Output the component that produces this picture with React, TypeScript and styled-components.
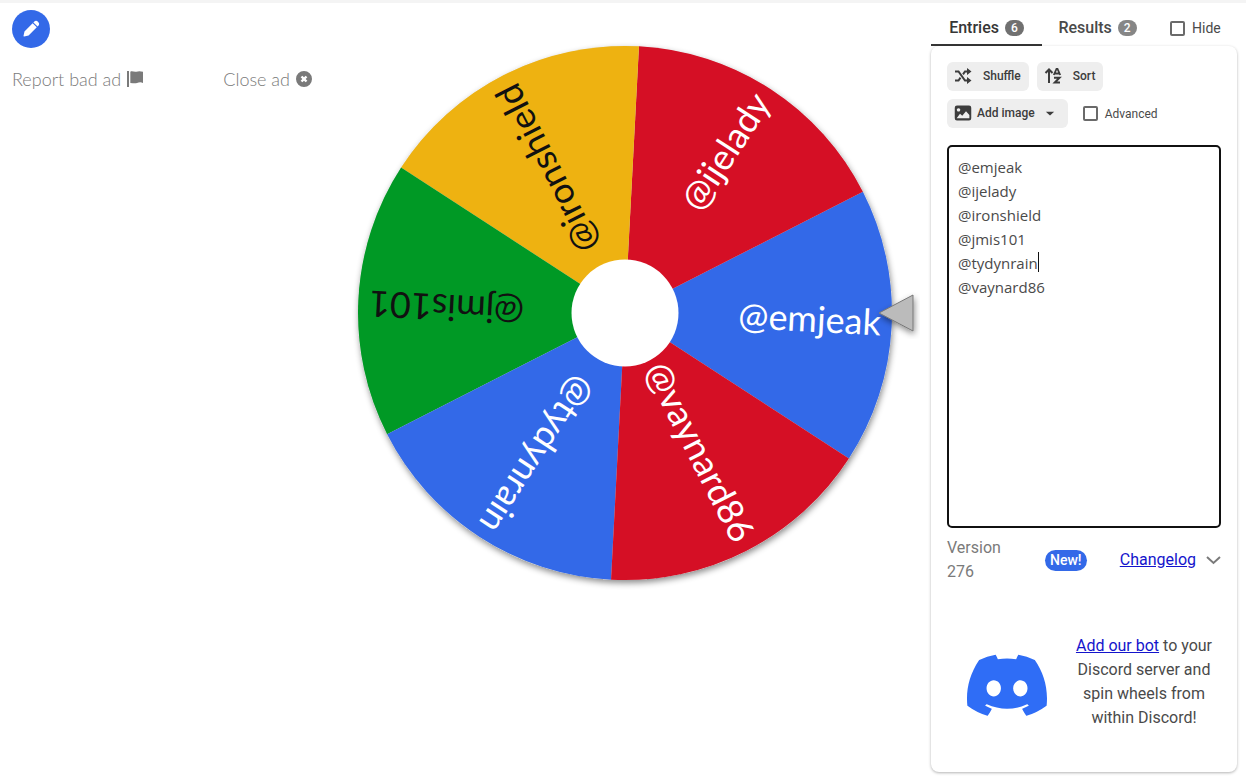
import React from "react";
import styled, { createGlobalStyle } from "styled-components";

const GlobalStyle = createGlobalStyle`
  * { box-sizing: border-box; }
  body { margin: 0; background: #fff; color: #4a4a4a; font: 16px/24px Roboto, sans-serif; }
  button, input, textarea { font-family: inherit; }
`;

const Page = styled.div`
  min-height: 100vh;
  display: grid;
  grid-template-columns: 319px minmax(0, 1fr) 306px;
  padding-right: 9px;
  border-top: 3px solid #f4f4f4;
`;

const AdColumn = styled.aside`
  padding: 7px 7px 0 12px;
`;

const EditButton = styled.button`
  display: grid;
  place-items: center;
  width: 38px;
  height: 38px;
  padding: 0;
  border: 0;
  border-radius: 50%;
  background: #3369e8;
  color: #fff;
`;

const AdActions = styled.div`
  display: flex;
  justify-content: space-between;
  margin-top: 19px;
`;

const AdButton = styled.button`
  display: flex;
  align-items: center;
  gap: 6px;
  padding: 0;
  border: 0;
  background: none;
  color: #7a7a7a;
  font: 300 18px/24px Lato, sans-serif;
`;

const WheelArea = styled.main`
  padding: 26px 17px 0 22px;
`;

const WheelSvg = styled.svg`
  display: block;
  width: 100%;
  height: auto;
  overflow: visible;
`;

const SliceLabel = styled.text`
  font-family: Lato, sans-serif;
  font-weight: 400;
  font-size: 36px;
  text-anchor: end;
`;

const Side = styled.section`
  display: flex;
  flex-direction: column;
  padding-bottom: 4px;
`;

const TabBar = styled.nav`
  display: flex;
  height: 43px;
`;

const Tab = styled.button<{ $active?: boolean }>`
  display: flex;
  align-items: center;
  justify-content: center;
  gap: 6px;
  width: 111px;
  padding: 8px 0 0;
  border: 0;
  border-bottom: 2px solid ${(p) => (p.$active ? "#363636" : "transparent")};
  background: none;
  color: ${(p) => (p.$active ? "#363636" : "#4a4a4a")};
  font-size: 16px;
  font-weight: 500;
  line-height: 24px;
`;

const Count = styled.span<{ $muted?: boolean }>`
  padding: 0 6px;
  border-radius: 8px;
  background: ${(p) => (p.$muted ? "#868686" : "#707070")};
  color: #fff;
  font-size: 12px;
  line-height: 16px;
`;

const Check = styled.label<{ $size: number }>`
  display: flex;
  align-items: center;
  gap: 7px;
  font-size: ${(p) => p.$size}px;
`;

const Box = styled.input`
  appearance: none;
  width: 15px;
  height: 15px;
  margin: 0;
  border: 2px solid #6a6a6a;
  border-radius: 2px;
`;

const HideSlot = styled.div`
  display: flex;
  padding: 7px 0 0 17px;
`;

const Card = styled.div`
  flex: 1;
  padding: 16px;
  border-radius: 8px;
  box-shadow: 0 1px 3px rgba(0, 0, 0, 0.3);
`;

const Row = styled.div`
  display: flex;
  align-items: center;
  gap: 8px;
  margin-bottom: 8px;
`;

const ToolButton = styled.button<{ $gap?: number }>`
  display: flex;
  align-items: center;
  gap: ${(p) => p.$gap ?? 11}px;
  height: 29px;
  padding: 0 8px 2px 7px;
  border: 0;
  border-radius: 6px;
  background: #eee;
  color: #3c3c3c;
  font-size: 12px;
  font-weight: 500;
`;

const AdvancedSlot = styled.div`
  padding-left: 7px;
`;

const Editor = styled.div`
  position: relative;
  margin-top: 17px;
`;

const Entries = styled.textarea`
  display: block;
  width: 100%;
  height: 383px;
  padding: 8px 9px;
  border: 2px solid #111;
  border-radius: 5px;
  outline: 0;
  resize: none;
  background: #fff;
  color: #4a4a4a;
  font: 15px/24px "Open Sans", "Noto Sans", sans-serif;
`;

const Caret = styled.span`
  position: absolute;
  left: 91px;
  top: 107px;
  width: 1px;
  height: 20px;
  background: #111;
`;

const VersionRow = styled.div`
  display: flex;
  align-items: center;
  margin-top: 8px;
`;

const Version = styled.div`
  width: 98px;
  padding-right: 32px;
  color: #7a7a7a;
`;

const NewTag = styled.span`
  padding: 0 5px;
  border-radius: 11px;
  background: #3369e8;
  color: #fff;
  font-size: 14px;
  font-weight: 500;
  line-height: 21px;
`;

const Link = styled.a`
  color: #1414cc;
`;

const Changelog = styled.div`
  display: flex;
  align-items: center;
  gap: 10px;
  margin-left: auto;
`;

const Promo = styled.div`
  display: flex;
  align-items: center;
  gap: 20px;
  margin-top: 50px;
  padding-left: 20px;
  text-align: center;
`;

const PromoText = styled.p`
  flex: 1;
  margin: 0;
`;

const R = 267;
const SLICES = [
  { name: "@emjeak", fill: "#3369e8", ink: "#fff" },
  { name: "@ijelady", fill: "#d50f25", ink: "#fff" },
  { name: "@ironshield", fill: "#eeb211", ink: "#111" },
  { name: "@jmis101", fill: "#009925", ink: "#111" },
  { name: "@tydynrain", fill: "#3369e8", ink: "#fff" },
  { name: "@vaynard86", fill: "#d50f25", ink: "#fff" },
];
const START = 3;

const point = (deg: number) => {
  const a = (deg * Math.PI) / 180;
  return `${(R * Math.cos(a)).toFixed(2)} ${(R * Math.sin(a)).toFixed(2)}`;
};

function Wheel() {
  return (
    <WheelSvg viewBox="-284 -284 573 573" role="img" aria-label="Wheel of names">
      <defs>
        <filter id="soft" x="-20%" y="-20%" width="140%" height="140%">
          <feDropShadow dx="1" dy="3" stdDeviation="3" floodOpacity="0.45" />
        </filter>
      </defs>
      <circle r={R} fill="#ddd" filter="url(#soft)" />
      {SLICES.map((s, i) => {
        const mid = START - i * 60;
        return (
          <g key={s.name}>
            <path d={`M0 0L${point(mid - 30)}A${R} ${R} 0 0 1 ${point(mid + 30)}Z`} fill={s.fill} />
            <SliceLabel x={256} y={9} fill={s.ink} transform={`rotate(${mid})`}>{s.name}</SliceLabel>
          </g>
        );
      })}
      <circle r="53.5" fill="#fff" />
      <path d="M254 0L288 -18V18Z" fill="#bbb" stroke="#777" strokeWidth="1" filter="url(#soft)" />
    </WheelSvg>
  );
}

const Icon = ({ d, size = 20 }: { d: string; size?: number }) => (
  <svg width={size} height={size} viewBox="0 0 24 24" fill="currentColor" aria-hidden="true">
    <path d={d} fillRule="evenodd" />
  </svg>
);

const ShuffleIcon = () => (
  <svg width="18" height="18" viewBox="0 0 18 18" fill="none" stroke="currentColor" strokeWidth="2" aria-hidden="true">
    <path d="M1 4.500h3.500L11 13.500h3M1 13.500h3.500L6.500 10.700M9 7.300L11 4.500h3" />
    <path d="M13 1l4.500 3.500L13 8zM13 10l4.500 3.500L13 17z" fill="currentColor" stroke="none" />
  </svg>
);

const SortIcon = () => (
  <svg width="18" height="18" viewBox="0 0 18 18" fill="none" stroke="currentColor" strokeWidth="2" aria-hidden="true">
    <path d="M5 16V3M1.500 6L5 2.500 8.500 6" />
    <path d="M9.800 8L12.500 2h1L16.200 8M11 6.500h4" strokeWidth="1.800" />
    <path d="M10 10.800h5.500L10.800 15.500H16" />
  </svg>
);

const PENCIL = "M21.500 2.500a4 4 0 0 0-5.600 0l-.7.7 5.600 5.600.7-.7a4 4 0 0 0 0-5.600zM14.200 4.300L3.300 15.200 2 21.200q-.1.900.8.800l6-1.300L19.700 9.800z";
const FLAG = "M0 0h3v24H0zM5 1c3-1.500 6 1 9 0s6-1 10 0v17c-3-1.500-6-1-9 0s-6 0-10 0z";
const CLOSE = "M12 0a12 12 0 1 0 0 24a12 12 0 0 0 0-24zM9.500 7l2.500 2.500L14.500 7 17 9.500 14.500 12l2.500 2.500-2.500 2.500-2.500-2.500L9.500 17 7 14.500 9.500 12 7 9.500z";
const IMAGE = "M4 2h16a3 3 0 0 1 3 3v14a3 3 0 0 1-3 3H4a3 3 0 0 1-3-3V5a3 3 0 0 1 3-3zM3.500 19h17v-4.500L16 9.500l-5 6-3-2.500zM6 5.500a2.300 2.300 0 1 0 .1 0z";
const DISCORD = "M20.317 4.370a19.791 19.791 0 0 0-4.885-1.515.074.074 0 0 0-.079.037c-.21.375-.444.864-.608 1.250a18.270 18.270 0 0 0-5.487 0 12.640 12.640 0 0 0-.617-1.250.077.077 0 0 0-.079-.037A19.736 19.736 0 0 0 3.677 4.370a.070.070 0 0 0-.032.027C.533 9.046-.320 13.580.099 18.057a.082.082 0 0 0 .031.057 19.900 19.900 0 0 0 5.993 3.030.078.078 0 0 0 .084-.028c.462-.630.874-1.295 1.226-1.994a.076.076 0 0 0-.041-.106 13.107 13.107 0 0 1-1.872-.892.077.077 0 0 1-.008-.128c.126-.094.252-.192.372-.292a.074.074 0 0 1 .077-.010c3.928 1.793 8.180 1.793 12.062 0a.074.074 0 0 1 .078.010c.120.098.246.198.373.292a.077.077 0 0 1-.006.127 12.299 12.299 0 0 1-1.873.892.077.077 0 0 0-.041.107c.360.698.772 1.362 1.225 1.993a.076.076 0 0 0 .084.028 19.839 19.839 0 0 0 6.002-3.030.077.077 0 0 0 .032-.054c.500-5.177-.838-9.674-3.549-13.660a.061.061 0 0 0-.031-.030zM8.020 15.331c-1.183 0-2.157-1.086-2.157-2.419s.955-2.419 2.157-2.419c1.210 0 2.176 1.095 2.157 2.419 0 1.333-.956 2.419-2.157 2.419zm7.975 0c-1.183 0-2.157-1.086-2.157-2.419s.955-2.419 2.157-2.419c1.210 0 2.176 1.095 2.157 2.419 0 1.333-.946 2.419-2.157 2.419z";

export default function App() {
  return (
    <>
      <GlobalStyle />
      <Page>
        <AdColumn>
          <EditButton aria-label="Customize"><Icon d={PENCIL} size={18} /></EditButton>
          <AdActions>
            <AdButton>Report bad ad <Icon d={FLAG} size={16} /></AdButton>
            <AdButton>Close ad <Icon d={CLOSE} size={16} /></AdButton>
          </AdActions>
        </AdColumn>
        <WheelArea><Wheel /></WheelArea>
        <Side>
          <TabBar>
            <Tab $active>Entries <Count>6</Count></Tab>
            <Tab>Results <Count $muted>2</Count></Tab>
            <HideSlot><Check $size={14}><Box type="checkbox" />Hide</Check></HideSlot>
          </TabBar>
          <Card>
            <Row>
              <ToolButton><ShuffleIcon />Shuffle</ToolButton>
              <ToolButton><SortIcon />Sort</ToolButton>
            </Row>
            <Row>
              <ToolButton $gap={5}>
                <Icon d={IMAGE} size={18} />Add image<Icon d="M7 10.500h10l-5 4.500z" size={20} />
              </ToolButton>
              <AdvancedSlot><Check $size={12}><Box type="checkbox" />Advanced</Check></AdvancedSlot>
            </Row>
            <Editor>
              <Entries
                aria-label="Entries"
                spellCheck={false}
                defaultValue={SLICES.map((s) => s.name).join("\n")}
              />
              <Caret />
            </Editor>
            <VersionRow>
              <Version>Version 276</Version>
              <NewTag>New!</NewTag>
              <Changelog>
                <Link href="#changelog">Changelog</Link>
                <svg width="15" height="10" viewBox="0 0 15 10" fill="none" stroke="#7a7a7a" strokeWidth="2" aria-hidden="true">
                  <path d="M1 2l6.500 6L14 2" />
                </svg>
              </Changelog>
            </VersionRow>
            <Promo>
              <svg width="80" height="70" viewBox="0 0.5 24 21" fill="#2f6df6" role="img" aria-label="Discord">
                <path d={DISCORD} />
              </svg>
              <PromoText>
                <Link href="#bot">Add our bot</Link> to your Discord server and spin wheels from within Discord!
              </PromoText>
            </Promo>
          </Card>
        </Side>
      </Page>
    </>
  );
}
